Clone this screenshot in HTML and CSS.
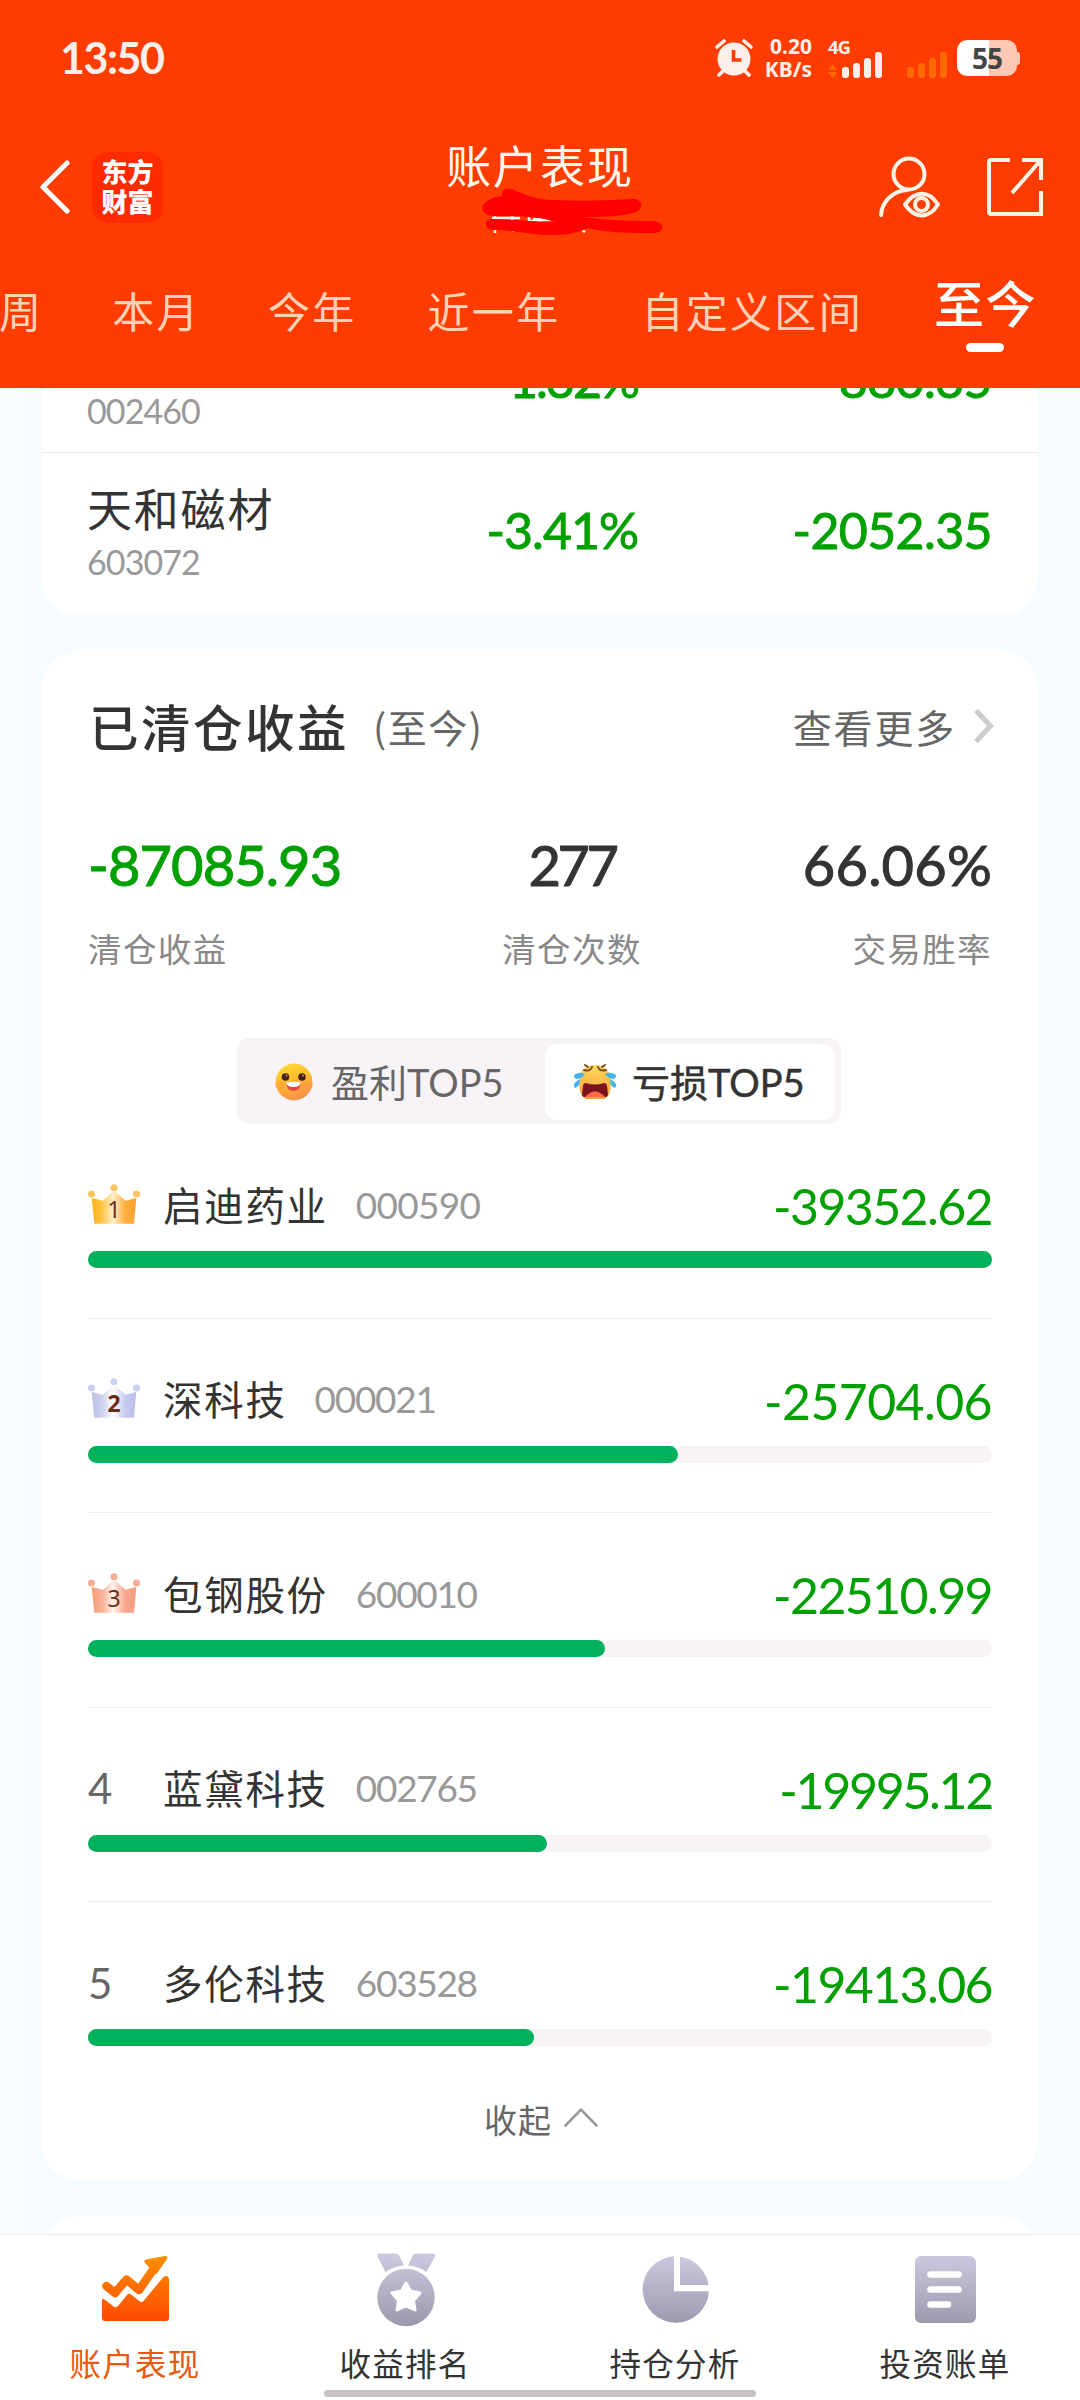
FILE: index.html
```html
<!DOCTYPE html>
<html lang="zh-CN">
<head>
<meta charset="utf-8">
<title>账户表现</title>
<link rel="stylesheet" href="styles.css">
</head>
<body>
<header class="header">
  <div class="status">
    <span class="clock">13:50</span>
    <div class="status-icons">
      <svg class="alarm" viewBox="0 0 38 38" width="38" height="38"><circle cx="19" cy="20" r="16.5" fill="#ffefea"/><path d="M2 8l7-6M36 8l-7-6M4 36l5-5M34 36l-5-5" stroke="#ffefea" stroke-width="3.6" fill="none" stroke-linecap="round"/><path d="M18.5 11v10h8" stroke="#ff3c00" stroke-width="3.6" fill="none"/></svg>
      <div class="speed"><span>0.20</span><span>KB/s</span></div>
      <div class="mobile">
        <span class="gen">4G</span>
        <svg viewBox="0 0 55 26" width="55" height="26"><path d="M4.500 12l4.500 6h-9zM4.500 26l4.500-6h-9z" fill="#ff6a00"/><g fill="#ffefea"><rect x="14" y="15" width="7" height="11" rx="3"/><rect x="25" y="11" width="7" height="15" rx="3"/><rect x="36" y="6" width="7" height="20" rx="3"/><rect x="47" y="0" width="7" height="26" rx="3"/></g></svg>
      </div>
      <svg class="nosim" viewBox="0 0 40 26" width="40" height="26"><g fill="#ff6a00"><rect x="0" y="15" width="7" height="11" rx="3"/><rect x="11" y="11" width="7" height="15" rx="3"/><rect x="22" y="6" width="7" height="20" rx="3"/><rect x="33" y="0" width="7" height="26" rx="3"/></g></svg>
      <div class="battery"><span>55</span></div>
    </div>
  </div>
  <nav class="nav">
    <div class="nav-left">
      <svg viewBox="0 0 30 54" width="30" height="54"><path d="M27 3L3 27l24 24" fill="none" stroke="#fff" stroke-width="5" stroke-linecap="round" stroke-linejoin="round"/></svg>
      <div class="brand"><span>东方</span><span>财富</span></div>
    </div>
    <div class="title">账户表现
      <svg class="scribble" viewBox="0 0 184 52" width="184" height="52">
        <path d="M12 30h28M15 26v19M28 40l6 3M32 26v6M49 26v7h12M53 31h17M60 32h10M88 44l6-2M100 40l5 4" stroke="#fff" stroke-width="2.500" fill="none"/>
        <path d="M22 4C25 0 30 0 36 3C48 8 58 12 74 12C96 13 120 13 150 11C162 9 165 20 156 24C140 29 120 29 102 29C120 31 136 33 172 33C186 33 185 45 174 45C150 45 128 45 108 40C92 48 76 47 62 47C46 45 30 42 14 42C3 42 3 31 13 31C36 31 56 34 76 34C60 29 42 28 18 28C-3 30-4 11 22 8Z" fill="#f00"/>
      </svg>
    </div>
    <div class="nav-right">
      <svg viewBox="0 0 63 62" width="63" height="62" fill="none" stroke="#fff3e6" stroke-width="4" stroke-linecap="round"><circle cx="31" cy="18" r="15.500"/><path d="M3 59C4 46 14 35 29 34"/><path d="M27 48.500C37 34 51 34 60 48.500C51 63 37 63 27 48.500Z" stroke-linejoin="round"/><circle cx="43.500" cy="48.500" r="6.500"/></svg>
      <svg viewBox="0 0 58 60" width="58" height="60" fill="none" stroke="#fff3e6" stroke-width="4"><path d="M24 3H5Q3 3 3 5V55Q3 57 5 57H55V34M36 3H55V23M26 36L54 4"/></svg>
    </div>
  </nav>
  <div class="tabs">
    <span class="tab">周</span><span class="tab t-month">本月</span><span class="tab t-year">今年</span><span class="tab t-recent">近一年</span><span class="tab t-custom">自定义区间</span><span class="tab active">至今</span>
  </div>
</header>

<main class="main">
  <section class="card holdings">
    <div class="hold">
      <div class="stock"><span class="hname">&nbsp;</span><span class="hcode">002460</span></div>
      <span class="num pct first">-1.32%</span><span class="num amt">-880.35</span>
    </div>
    <div class="hold">
      <div class="stock"><span class="hname">天和磁材</span><span class="hcode">603072</span></div>
      <span class="num pct">-3.41%</span><span class="num amt">-2052.35</span>
    </div>
  </section>

  <section class="card closed">
    <div class="heading">
      <h2>已清仓收益</h2><span class="range">(至今)</span>
      <span class="more">查看更多</span>
      <svg viewBox="0 0 20 36" width="20" height="36"><path d="M2 2.500L16.500 18L2 33.500" fill="none" stroke="#ccc" stroke-width="5"/></svg>
    </div>
    <div class="stats">
      <div class="stat total"><b>-87085.93</b><span>清仓收益</span></div>
      <div class="stat count"><b>277</b><span>清仓次数</span></div>
      <div class="stat rate"><b>66.06%</b><span>交易胜率</span></div>
    </div>
    <div class="segment">
      <div class="seg">
        <svg viewBox="0 0 38 38" width="38" height="38"><defs><linearGradient id="face" x1="0" y1="0" x2=".4" y2="1"><stop offset="0" stop-color="#ffdf3a"/><stop offset=".5" stop-color="#ffbe2c"/><stop offset="1" stop-color="#f8924a"/></linearGradient></defs><circle cx="19" cy="19" r="18.500" fill="url(#face)"/><ellipse cx="5" cy="22" rx="5" ry="4" fill="#ff9a3c" opacity=".5"/><ellipse cx="33" cy="22" rx="5" ry="4" fill="#ff9a3c" opacity=".5"/><circle cx="10.500" cy="14" r="3.800" fill="#4a201c"/><circle cx="27" cy="14" r="3.800" fill="#4a201c"/><circle cx="11.500" cy="12.500" r="1" fill="#b99"/><circle cx="28" cy="12.500" r="1" fill="#b99"/><path d="M11 19.500Q19 18 26 19.500Q25 28 18.500 28Q12 28 11 19.500Z" fill="#e5483c"/><path d="M11 19.500Q19 18 26 19.500Q25 24 18.500 24Q12 24 11 19.500Z" fill="#fff"/></svg>
        <span>盈利TOP5</span>
      </div>
      <div class="seg on">
        <svg viewBox="0 0 44 36" width="44" height="36"><defs><linearGradient id="cry" x1="0" y1="0" x2="0" y2="1"><stop offset="0" stop-color="#ffd95c"/><stop offset="1" stop-color="#f9a03a"/></linearGradient></defs><path d="M22 1C34 1 38 9 38 18C38 27 36 35 29 35H15C8 35 6 27 6 18C6 9 10 1 22 1Z" fill="url(#cry)"/><path d="M11 6Q17 8 19 3M25 3Q27 8 33 6M15 3l-3-2M29 3l3-2" stroke="#7d4a2a" stroke-width="2" fill="none" stroke-linecap="round"/><path d="M10 22Q10 19 13 19Q22 22 31 19Q34 19 34 22L35 31Q34 34 30 33H14Q10 34 9 31Z" fill="#7c1420"/><path d="M12 33Q22 22 32 33Z" fill="#ff6a4a"/><path d="M1 11Q7 7 12 10Q10 14 4 15Q1 15 1 11ZM43 11Q37 7 32 10Q34 14 40 15Q43 15 43 11ZM7 15Q7 23 2 24Q-2 20 7 15ZM37 15Q37 23 42 24Q46 20 37 15Z" fill="#45b4ee"/></svg>
        <span>亏损TOP5</span>
      </div>
    </div>

    <div class="rank">
      <div class="line">
        <svg class="crown" viewBox="0 0 52 40" width="52" height="40"><defs><linearGradient id="c1"><stop offset="0" stop-color="#ffb21a"/><stop offset=".2" stop-color="#ffc03a"/><stop offset=".48" stop-color="#fff0c8"/><stop offset=".75" stop-color="#ffae3c"/><stop offset="1" stop-color="#ff9f2c"/></linearGradient></defs><g fill="#ffc360"><circle cx="3.500" cy="10" r="3.500"/><circle cx="26" cy="3.700" r="3.500"/><circle cx="48.500" cy="10" r="3.500"/></g><path d="M3.700 14L15 16.700L26 6.500L37.500 16.700L48.300 14L46 39.700H6.300Z" fill="url(#c1)"/><text class="cnum" x="26" y="34">1</text></svg>
        <span class="name">启迪药业</span><span class="code">000590</span><span class="loss">-39352.62</span>
      </div>
      <div class="bar"><i style="width:100%"></i></div>
    </div>
    <div class="rank">
      <div class="line">
        <svg class="crown" viewBox="0 0 52 40" width="52" height="40"><defs><linearGradient id="c2"><stop offset="0" stop-color="#b9bfe8"/><stop offset=".25" stop-color="#cfd3ef"/><stop offset=".48" stop-color="#fff"/><stop offset=".75" stop-color="#c6caee"/><stop offset="1" stop-color="#b9bdec"/></linearGradient></defs><g fill="#cdd1f1"><circle cx="3.500" cy="10" r="3.500"/><circle cx="26" cy="3.700" r="3.500"/><circle cx="48.500" cy="10" r="3.500"/></g><path d="M3.700 14L15 16.700L26 6.500L37.500 16.700L48.300 14L46 39.700H6.300Z" fill="url(#c2)"/><text class="cnum bold" x="26" y="34">2</text></svg>
        <span class="name">深科技</span><span class="code narrow">000021</span><span class="loss wide">-25704.06</span>
      </div>
      <div class="bar"><i style="width:65.3%"></i></div>
    </div>
    <div class="rank">
      <div class="line">
        <svg class="crown" viewBox="0 0 52 40" width="52" height="40"><defs><linearGradient id="c3"><stop offset="0" stop-color="#f79a78"/><stop offset=".25" stop-color="#fbb39a"/><stop offset=".48" stop-color="#fff3ee"/><stop offset=".75" stop-color="#f8a78c"/><stop offset="1" stop-color="#f59c80"/></linearGradient></defs><g fill="#f6ab94"><circle cx="3.500" cy="10" r="3.500"/><circle cx="26" cy="3.700" r="3.500"/><circle cx="48.500" cy="10" r="3.500"/></g><path d="M3.700 14L15 16.700L26 6.500L37.500 16.700L48.300 14L46 39.700H6.300Z" fill="url(#c3)"/><text class="cnum" x="26" y="34">3</text></svg>
        <span class="name">包钢股份</span><span class="code narrow">600010</span><span class="loss">-22510.99</span>
      </div>
      <div class="bar"><i style="width:57.2%"></i></div>
    </div>
    <div class="rank">
      <div class="line"><span class="pos">4</span><span class="name">蓝黛科技</span><span class="code narrow">002765</span><span class="loss tight">-19995.12</span></div>
      <div class="bar"><i style="width:50.8%"></i></div>
    </div>
    <div class="rank">
      <div class="line"><span class="pos">5</span><span class="name">多伦科技</span><span class="code narrow">603528</span><span class="loss">-19413.06</span></div>
      <div class="bar"><i style="width:49.3%"></i></div>
    </div>
    <div class="fold"><span>收起</span><svg viewBox="0 0 34 20" width="34" height="20"><path d="M1.500 18.500L17 2.500L32.500 18.500" fill="none" stroke="#999" stroke-width="2.600" stroke-linecap="round"/></svg></div>
  </section>
  <section class="card next"></section>
</main>

<footer class="tabbar">
  <div class="item current">
    <svg viewBox="0 0 80 76" width="80" height="76"><defs><linearGradient id="org" x1="0" y1="4" x2="0" y2="70" gradientUnits="userSpaceOnUse"><stop offset="0" stop-color="#ff8f00"/><stop offset="1" stop-color="#ff4800"/></linearGradient></defs><path d="M11.500 34L20 41L31.500 27.500L44 38L60 15" fill="none" stroke="url(#org)" stroke-width="8.500" stroke-linecap="round" stroke-linejoin="round"/><path d="M51 8L70 4.500Q73 4 71.500 7L61 22L52 12.500Q48 8.500 51 8Z" fill="url(#org)" stroke="url(#org)"/><path d="M7 48Q7 46 9.500 47.500L18.500 54.500Q21 56 23 54L32 43Q34 41 36 42.500L45 49.500Q47 51 48.500 49L68 25.500Q73 22 74 27V66Q74 69 71 69H10Q7 69 7 66Z" fill="url(#org)"/></svg>
    <span>账户表现</span>
  </div>
  <div class="item">
    <svg viewBox="0 0 80 76" width="80" height="76"><defs><linearGradient id="gry" x1="0" y1="2" x2="0" y2="74" gradientUnits="userSpaceOnUse"><stop offset="0" stop-color="#cccae0"/><stop offset="1" stop-color="#9b98ac"/></linearGradient></defs><g transform="translate(1 0)"><path d="M13 1.500H30Q32 1.500 33 3L38 13.500Q28 14 19.500 20L11 3.500Q11 1.500 13 1.500ZM67 1.500H50Q48 1.500 47 3L42 13.500Q52 14 60.500 20L69.500 3.500Q69.500 1.500 67 1.500Z" fill="url(#gry)"/><circle cx="40" cy="45.500" r="28.700" fill="url(#gry)"/><path d="M40 31L44.500 39L54 41L47.500 48.500L49 58L40 54L31 58L32.500 48.500L26 41L35.500 39Z" fill="#fff" stroke="#fff" stroke-width="3" stroke-linejoin="round"/></g></svg>
    <span>收益排名</span>
  </div>
  <div class="item">
    <svg viewBox="0 0 80 76" width="80" height="76"><path d="M39 4.300A33.200 33.200 0 1 0 74 39.300H39Z" fill="url(#gry)"/><path d="M45 4.800A33.500 33.500 0 0 1 73.500 33H45Z" fill="url(#gry)"/></svg>
    <span>持仓分析</span>
  </div>
  <div class="item">
    <svg viewBox="0 0 80 76" width="80" height="76"><rect x="10" y="4" width="61" height="67" rx="6" fill="url(#gry)"/><path d="M25.500 22.500H53.500M25.500 37.500H53.500M25.500 52.500H43" stroke="#fff" stroke-width="6.600" stroke-linecap="round"/></svg>
    <span>投资账单</span>
  </div>
  <div class="homebar"></div>
</footer>
</body>
</html>
```
FILE: styles.css
```css
* { box-sizing: border-box; }
body {
  margin: 0;
  width: 1080px;
  height: 2400px;
  overflow: hidden;
  display: flex;
  flex-direction: column;
  background: #f5fbff;
  color: #333;
  font-family: "Noto Sans CJK SC", sans-serif;
  white-space: nowrap;
}
svg { display: block; flex: none; }

/* header */
.header { height: 388px; background: #ff3c00; flex: none; overflow: hidden; }
.status { height: 116px; display: flex; align-items: center; justify-content: space-between; padding: 0 63px 0 60px; color: #ffefea; }
.clock { font: 700 43px/50px Lato, sans-serif; letter-spacing: -1.5px; }
.status-icons { display: flex; align-items: center; }
.speed { width: 59px; display: flex; flex-direction: column; align-items: flex-end; font: 700 21px/23px "Noto Sans", sans-serif; }
.mobile { margin-left: 16px; width: 55px; position: relative; }
.mobile svg { margin-top: 14px; }
.gen { position: absolute; left: 0; top: -4px; font: 700 18.500px/26px "Noto Sans", sans-serif; letter-spacing: -1px; }
.nosim { margin: 14px 10px 0 24px; }
.battery { position: relative; width: 60px; height: 36px; border-radius: 10px; background: linear-gradient(90deg, #fff 54%, #ffc8b4 54%); text-align: center; color: #444; font: 700 28px/36px "Noto Sans", sans-serif; letter-spacing: -1px; }
.battery::after { content: ""; position: absolute; left: 60px; top: 12px; width: 3px; height: 13px; border-radius: 0 3px 3px 0; background: #ffc8b4; }

.nav { height: 142px; display: grid; grid-template-columns: 1fr auto 1fr; padding: 0 36px 0 40px; }
.nav-left { display: flex; align-items: center; gap: 22px; }
.brand { width: 71px; height: 71px; border-radius: 15px; background: #ff2a00; color: #fff; display: flex; flex-direction: column; align-items: center; padding-top: 4px; font-weight: 900; font-size: 26px; line-height: 30px; }
.title { position: relative; left: -2px; padding-top: 19px; font-size: 45px; line-height: 60px; letter-spacing: 1.900px; color: #fff8ec; }
.scribble { position: absolute; left: 34px; top: 72px; overflow: visible; }
.nav-right { display: flex; align-items: center; justify-content: flex-end; gap: 45px; }

.tabs { display: flex; padding-top: 22px; margin-left: -1px; color: #ffd2b8; font-size: 42px; line-height: 60px; letter-spacing: 2.300px; }
.tab { flex: none; }
.t-month { margin-left: 69px; }
.t-year { margin-left: 67px; }
.t-recent { margin-left: 71px; }
.t-custom { margin-left: 81px; }
.active { margin-left: 71px; color: #fff; font-size: 50px; font-weight: 500; line-height: 42px; letter-spacing: 1.500px; }
.active::after { content: ""; display: block; width: 38px; height: 9px; border-radius: 5px; background: #fff; margin: 21px auto 0; }

/* content */
.main { flex: 1; min-height: 0; overflow: hidden; padding: 0 43px 0 42px; background: linear-gradient(90deg, #f8fcff 0, #f5fbff 42px); }
.card { background: #fff; border-radius: 36px; }
.holdings { margin-top: -86px; height: 313px; }
.hold { height: 151px; display: grid; grid-template-columns: 300px 251px 1fr; padding: 0 45px; border-bottom: 1px solid #ececec; }
.hold:last-child { border: 0; }
.stock { display: flex; flex-direction: column; padding-top: 27px; }
.hname { font-size: 45px; line-height: 56px; letter-spacing: 1.800px; }
.hcode { margin-top: 6px; font: 400 34px/40px Lato, sans-serif; letter-spacing: -.9px; color: #999; }
.num { font: 400 50px/155px Lato, sans-serif; letter-spacing: -1px; color: #00a000; text-align: right; -webkit-text-stroke: .9px #00a000; }
.first { letter-spacing: -2px; }
.amt { letter-spacing: -.6px; }

.closed { margin-top: 36px; height: 1529px; padding: 40px 45px 0 46px; }
.heading { height: 70px; display: flex; align-items: center; }
.heading h2 { margin: 0; padding-left: 1px; font-size: 49.500px; font-weight: 500; letter-spacing: 2.500px; line-height: 70px; }
.range { margin-left: 24px; font-size: 39px; letter-spacing: 1.500px; color: #666; }
.more { margin-left: auto; margin-right: 18px; font-size: 39px; letter-spacing: 1.800px; color: #666; }
.heading svg { margin-right: -2px; }
.stats { display: flex; justify-content: space-between; margin-top: 71px; }
.stat { display: flex; flex-direction: column; }
.stat b { font: 400 56px/65px Lato, sans-serif; -webkit-text-stroke: 1px currentColor; }
.stat span { margin-top: 29px; font-size: 33.500px; line-height: 44px; letter-spacing: 1.400px; color: #888; }
.total b { color: #00a000; letter-spacing: -.9px; }
.count { align-items: center; }
.count b { letter-spacing: -3.500px; }
.rate { align-items: flex-end; }
.rate b { letter-spacing: .2px; }
.segment { width: 604px; height: 86px; margin: 68px 0 0 149px; padding: 6px; border-radius: 12px; background: #f7f3f7; display: grid; grid-template-columns: 302px 290px; }
.seg { display: flex; align-items: center; padding-left: 32px; font: 400 38px/76px Lato, "Noto Sans CJK SC", sans-serif; color: #666; }
.seg span { margin-left: 18px; letter-spacing: 0; }
.on { background: #fff; border-radius: 12px; padding-left: 28px; color: #333; -webkit-text-stroke: .5px #333; }
.on span { margin-left: 15px; }

.rank { height: 194.500px; padding-top: 49.500px; border-bottom: 1.500px solid #ededed; }
.rank:nth-last-child(2) { border: 0; }
.line { height: 60px; display: flex; align-items: center; line-height: 60px; }
.crown { margin-right: 23px; }
.cnum { font: 400 23px "Noto Sans", sans-serif; fill: #6a2c18; text-anchor: middle; }
.cnum.bold { font-weight: 700; }
.pos { width: 75px; padding-top: 2px; font: 400 42px/60px Lato, sans-serif; color: #666; }
.name { font-size: 39.500px; letter-spacing: 1.700px; }
.code { margin-left: 28px; padding-top: 2px; font: 400 37px/60px Lato, sans-serif; letter-spacing: -.7px; color: #999; }
.code.narrow { letter-spacing: -1.300px; }
.loss { margin-left: auto; padding-top: 5px; font: 400 50px/60px Lato, sans-serif; letter-spacing: -1.600px; color: #00a000; }
.loss.wide { letter-spacing: -.6px; }
.loss.tight { letter-spacing: -2.300px; }
.bar { margin-top: 17.500px; height: 17px; border-radius: 9px; background: #f7f3f7; }
.bar i { display: block; height: 17px; border-radius: 9px; background: #00b15b; }
.fold { display: flex; align-items: center; justify-content: center; gap: 12px; padding-left: 2px; height: 44px; font-size: 33px; line-height: 44px; letter-spacing: 1px; color: #666; }
.fold svg { margin-top: -4px; }
.next { margin-top: 36px; height: 100px; }

/* bottom navigation */
.tabbar { position: relative; flex: none; height: 166px; display: grid; grid-template-columns: repeat(4, 270px); background: #fff; border-top: 1px solid #e8ecee; }
.item { display: flex; flex-direction: column; align-items: center; padding-top: 17px; }
.item span { margin-top: 14px; font-size: 31.500px; line-height: 40px; letter-spacing: 1.200px; }
.current span { color: #e8590c; }
.homebar { position: absolute; left: 324px; top: 155px; width: 432px; height: 7px; border-radius: 4px; background: #c8c2c5; }
```
